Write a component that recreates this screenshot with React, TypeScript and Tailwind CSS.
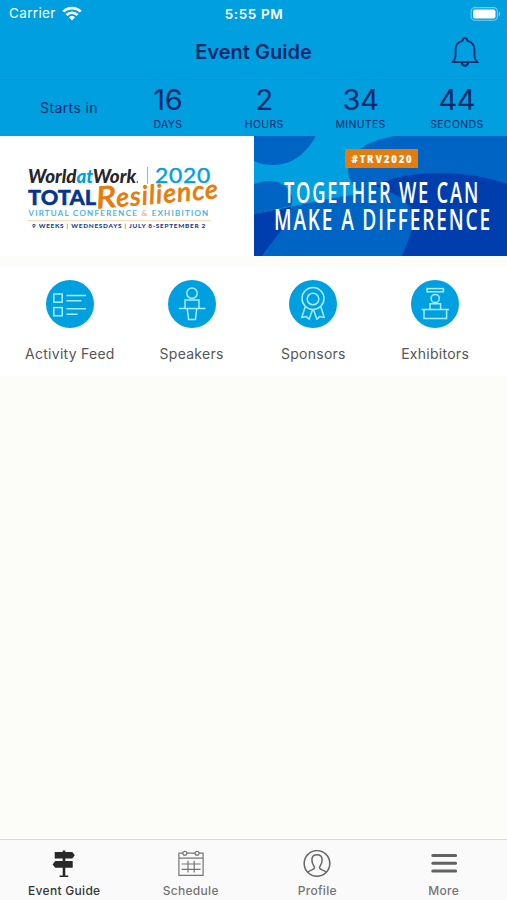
import type { ReactNode } from "react";

const SpeakerIcon = () => (
  <svg viewBox="0 0 48 48" className="w-12 h-12" fill="none" stroke="#a5edff" strokeWidth="1.5">
    <circle cx="24" cy="13.2" r="5.2" />
    <path d="M17 28v-8h14v8M11 28.4h26.5M19.2 28.4l1.4 11h6.8l1.4-11" />
  </svg>
);

const FeedIcon = () => (
  <svg viewBox="0 0 48 48" className="w-12 h-12" fill="none" stroke="#a5edff" strokeWidth="1.5">
    <rect x="7.8" y="14" width="8.4" height="8.2" />
    <rect x="7.8" y="27.6" width="8.4" height="8.2" />
    <path d="M20.5 15.4h19.5M20.5 20.8h15M20.5 28.8h19.5M20.5 34.3h11" />
  </svg>
);

const SponsorIcon = () => (
  <svg viewBox="0 0 48 48" className="w-12 h-12" fill="none" stroke="#a5edff" strokeWidth="1.5" strokeLinejoin="round">
    <circle cx="24" cy="18.5" r="11" />
    <circle cx="24" cy="19" r="5.8" />
    <path d="M16.2 26.8l-3.5 10.8 4.7-1 2.7 2.7L23.6 29.6M31.8 26.8l3.5 10.8-4.7-1-2.7 2.7L24.4 29.6" />
  </svg>
);

const ExhibitorIcon = () => (
  <svg viewBox="0 0 48 48" className="w-12 h-12" fill="none" stroke="#a5edff" strokeWidth="1.5">
    <rect x="16" y="8.6" width="16.4" height="3.2" />
    <circle cx="24.2" cy="18.5" r="4.1" />
    <path d="M19 29v-5.2h10.6V29M10.5 29.4h27.5M13 29.4v9.1h22.6v-9.1" />
  </svg>
);

const SignpostIcon = () => (
  <svg viewBox="0 0 28 28" className="w-7 h-7" fill="#292929">
    <path d="M12.7.5h2.6V2h7l2.5 3.2-2.5 3.2h-7v2.7h7.4v6.6h-7.4v7.7h2.9V27H9.6v-1.6h3.1v-7.7H5.2l-2.6-3.3 2.6-3.3h7.5V8.4H4.7V2h8z" />
  </svg>
);

const CalendarIcon = () => (
  <svg viewBox="0 0 28 28" className="w-7 h-7" fill="none" stroke="#757575" strokeWidth="1.2">
    <path d="M6 3.2H1.9v22.2h24.2V3.2H22M9.8 3.2h8.4M1.9 8.1h24.2" />
    <circle cx="7.9" cy="3.3" r="2" />
    <circle cx="20.1" cy="3.3" r="2" />
    <path d="M4.6 14h19M4.6 19.4h19M11 10.8v11.8M17.2 10.8v11.8" />
  </svg>
);

const ProfileIcon = () => (
  <svg viewBox="0 0 28 28" className="w-7 h-7" fill="none" stroke="#666" strokeWidth="1.5">
    <circle cx="14" cy="13.4" r="12.8" />
    <path d="M4.8 22.2c1.6-2.2 6.4-2.2 6.7-4.3.2-1.8-2.6-3.3-2.6-8 0-3.3 2-5.2 5.1-5.2s5.1 1.9 5.1 5.2c0 4.7-2.8 6.2-2.6 8 .3 2.1 5.1 2.1 6.7 4.3" />
  </svg>
);

const MenuIcon = () => (
  <svg viewBox="0 0 28 28" className="w-7 h-7" stroke="#626262" strokeWidth="3" strokeLinecap="round">
    <path d="M2.8 5.5h22.8M2.8 13.2h22.8M2.8 20.9h22.8" />
  </svg>
);

const countdown = [
  { value: "16", unit: "DAYS" },
  { value: "2", unit: "HOURS" },
  { value: "34", unit: "MINUTES" },
  { value: "44", unit: "SECONDS" },
];

const shortcuts: { label: string; icon: ReactNode }[] = [
  { label: "Activity Feed", icon: <FeedIcon /> },
  { label: "Speakers", icon: <SpeakerIcon /> },
  { label: "Sponsors", icon: <SponsorIcon /> },
  { label: "Exhibitors", icon: <ExhibitorIcon /> },
];

const tabs: { label: string; icon: ReactNode; active?: boolean }[] = [
  { label: "Event Guide", icon: <SignpostIcon />, active: true },
  { label: "Schedule", icon: <CalendarIcon /> },
  { label: "Profile", icon: <ProfileIcon /> },
  { label: "More", icon: <MenuIcon /> },
];

const StatusBar = () => (
  <div className="h-[27px] grid grid-cols-3 items-center pl-[9px] pr-[6px] text-white text-[13.5px]">
    <div className="flex items-center gap-[6px] tracking-[0.35px]">
      Carrier
      <svg viewBox="0 0 20 15" className="w-5 h-[15px]" fill="none" stroke="white" strokeWidth="2.7">
        <path d="M1.3 5.6a12.4 12.4 0 0 1 17.4 0M4.5 9a7.8 7.8 0 0 1 11 0" />
        <path d="M10 14.5l-3-3.2a4.2 4.2 0 0 1 6 0z" fill="white" stroke="none" />
      </svg>
    </div>
    <div className="-ml-[2px] pt-[1px] text-center font-semibold tracking-[0.6px] whitespace-nowrap">5:55 PM</div>
    <svg viewBox="0 0 31 14" className="w-[31px] h-[14px] justify-self-end">
      <rect x="1.1" y=".6" width="26.3" height="12.6" rx="3.8" fill="none" stroke="#7bcdf1" strokeWidth="1.1" />
      <rect x="3" y="2.4" width="22.5" height="9" rx="2" fill="white" />
      <path d="M28.8 4.5c1.8.8 1.8 4.2 0 5z" fill="#7bcdf1" />
    </svg>
  </div>
);

const LogoBanner = () => (
  <svg viewBox="0 -1 254 120" className="w-[254px] h-[120px] bg-white">
    <g fontFamily="Lato, sans-serif">
      <text x="28" y="46" fontSize="18.3" fontWeight="900" fontStyle="italic" fill="#26262b" textLength="108" lengthAdjust="spacingAndGlyphs">
        World<tspan fill="#00a0df">at</tspan>Work
      </text>
      <circle cx="137.3" cy="45" r=".8" fill="#26262b" />
      <path d="M147.5 30v17" stroke="#71c5e8" strokeWidth="1" />
      <text x="155" y="46" fontSize="20.5" fill="#00a0df" stroke="#00a0df" strokeWidth=".4" letterSpacing=".7" textLength="56" lengthAdjust="spacingAndGlyphs">2020</text>
      <text x="28" y="68" fontSize="21" fontWeight="900" fill="#06348f" stroke="#06348f" strokeWidth=".4" textLength="68" lengthAdjust="spacingAndGlyphs">TOTAL</text>
      <g transform="rotate(-5 98 71)" fill="#e57c0b" stroke="#e57c0b" strokeWidth=".9" fontStyle="italic" fontWeight="400">
        <text x="97" y="71.5" fontSize="30" textLength="20" lengthAdjust="spacingAndGlyphs">R</text>
        <text x="117" y="71.5" fontSize="26" letterSpacing="1.2" textLength="103" lengthAdjust="spacingAndGlyphs">esilience</text>
      </g>
      <text x="28.5" y="79" fontSize="7.4" fontWeight="400" fill="#38ade0" stroke="#38ade0" strokeWidth=".15" letterSpacing="1.2" textLength="181" lengthAdjust="spacingAndGlyphs">
        VIRTUAL CONFERENCE <tspan fill="#eaa99b" stroke="#eaa99b">&amp;</tspan> EXHIBITION
      </text>
      <path d="M28 83.6h183" stroke="#f6cf9e" strokeWidth=".8" />
      <text x="32" y="90.5" fontSize="5.4" fontWeight="900" fill="#20408f" letterSpacing=".6" textLength="174" lengthAdjust="spacingAndGlyphs">
        9 WEEKS <tspan fill="#e57c0b">|</tspan> WEDNESDAYS <tspan fill="#e57c0b">|</tspan> JULY 8-SEPTEMBER 2
      </text>
    </g>
  </svg>
);

const PromoBanner = () => (
  <svg viewBox="0 -1 253 120" className="w-[253px] h-[120px] bg-[#009fe0]">
    <path d="M0-1h62C52 17 37 28 20 28 12 28 6 27 0 24z" fill="#0064c4" />
    <path d="M0 47c13-5 27-4 33 4 5 6 7 12 4 18L0 77z" fill="#0064c4" />
    <path d="M0 77c50-9 84-19 109-20-16-11-18-25-11-35C105 8 121 3 140-1h113v120H0z" fill="#0064c4" />
    <path d="M0 77l37-7c0 17-12 24-29 49H0z" fill="#003eae" />
    <path d="M122 49c32-19 97-15 131-2v72H148c9-21 14-35 7-49-5-11-19-15-33-21z" fill="#003eae" />
    <rect x="91" y="12" width="73" height="19" fill="#e57c0b" />
    <text x="97.5" y="25.6" fill="white" fontFamily="Open Sans, sans-serif" fontSize="10.5" fontWeight="800" letterSpacing="2" textLength="62" lengthAdjust="spacingAndGlyphs">#TRV2020</text>
    <g fill="white" fontFamily="Open Sans, sans-serif" fontSize="29" fontWeight="600" letterSpacing="2.8">
      <text x="30" y="65.6" textLength="196" lengthAdjust="spacingAndGlyphs">TOGETHER WE CAN</text>
      <text x="20" y="93.2" textLength="218" lengthAdjust="spacingAndGlyphs">MAKE A DIFFERENCE</text>
    </g>
  </svg>
);

const App = () => {
  return (
    <div className="w-[507px] h-[900px] flex flex-col overflow-hidden bg-[#fcfdf8] font-['Inter','Liberation_Sans',sans-serif]">
      <header className="bg-[#009fe0] text-[#06296c]">
        <StatusBar />
        <div className="h-[53px] pb-[2px] grid grid-cols-3 items-center border-b border-[#0793d0]">
          <h1 className="col-start-2 text-center text-[20px] leading-6 font-semibold whitespace-nowrap tracking-[0.02px]">Event Guide</h1>
          <svg viewBox="0 0 28 30" className="w-7 h-[30px] justify-self-end mr-[28px]" fill="none" stroke="#06296c" strokeWidth="1.8" strokeLinejoin="round">
            <path d="M11.6 3.8c0-3.7 4.8-3.7 4.8 0 4.4 1.1 7.1 4.4 7.1 9v6.8c0 2.7 1.2 3.5 3.2 5.6H1.3c2-2.1 3.2-2.9 3.2-5.6v-6.8c0-4.6 2.7-7.9 7.1-9zM11 25.6c.2 4.2 5.8 4.2 6 0" />
          </svg>
        </div>
        <div className="h-14 flex pr-[2px]">
          <div className="flex-1 pl-10 pt-[19px] text-[14px] leading-[18px] tracking-[0.4px]">Starts in</div>
          {countdown.map((item) => (
            <div key={item.unit} className="w-[96.3px] pt-1 text-center">
              <div className="text-[29px] leading-8 tracking-[-0.3px]">{item.value}</div>
              <div className="text-[10.5px] leading-[17px] tracking-[0.35px]">{item.unit}</div>
            </div>
          ))}
        </div>
      </header>

      <div className="flex h-[120px]">
        <LogoBanner />
        <PromoBanner />
      </div>

      <div className="mt-[10px] h-[110px] bg-white flex pl-[9px] pr-[11px]">
        {shortcuts.map((item) => (
          <div key={item.label} className="flex-1 flex flex-col items-center pt-[14px]">
            <div className="w-12 h-12 rounded-full bg-[#009fe0]">{item.icon}</div>
            <span className="mt-[17px] text-[14px] leading-[18px] tracking-[0.27px] text-[#555] whitespace-nowrap">{item.label}</span>
          </div>
        ))}
      </div>

      <nav className="mt-auto h-[61px] flex pl-[1px] bg-[#fafafa] border-t border-[#d9d9d9]">
        {tabs.map((tab) => (
          <div key={tab.label} className="flex-1 flex flex-col items-center pt-[10px]">
            {tab.icon}
            <span
              className={`mt-[5px] text-[12px] leading-4 font-medium tracking-[0.3px] ${tab.active ? "text-[#363636]" : "text-[#747474]"}`}
            >
              {tab.label}
            </span>
          </div>
        ))}
      </nav>
    </div>
  );
};

export default App;
